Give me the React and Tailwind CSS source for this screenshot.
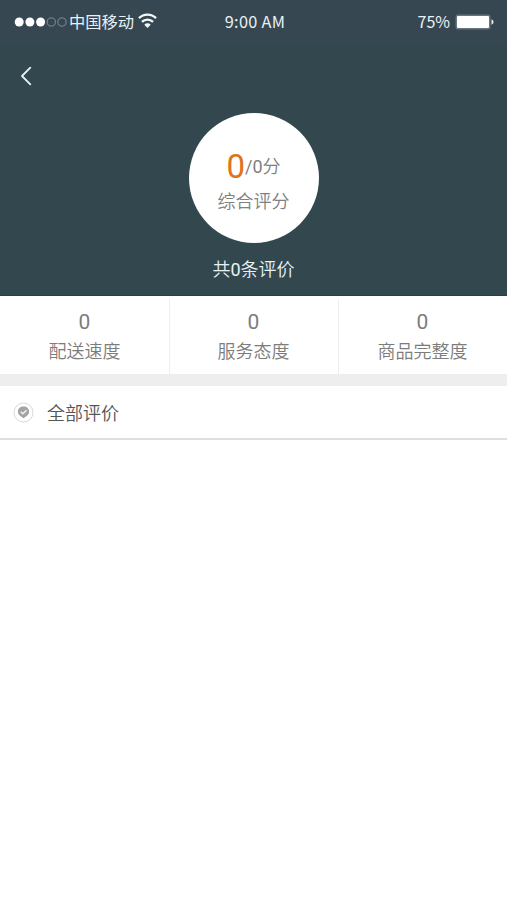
import React from "react";

const stats = [
  { label: "配送速度", value: 0 },
  { label: "服务态度", value: 0 },
  { label: "商品完整度", value: 0 },
];

const StatusBar = () => (
  <div className="grid h-11 grid-cols-3 items-center bg-[#364752] pr-[13px] pl-[14px] font-['Noto_Sans_CJK_SC',sans-serif] text-[16.3px] leading-none font-normal text-[#e8f2f5]">
    <div className="flex items-center">
      <svg width="54" height="12" viewBox="0 0 54 12" className="shrink-0">
        <circle cx="5.2" cy="6" r="4.5" fill="#fff" />
        <circle cx="15.9" cy="6" r="4.5" fill="#fff" />
        <circle cx="26.6" cy="6" r="4.5" fill="#fff" />
        <circle cx="37.3" cy="6" r="4.1" fill="none" stroke="#7f8f98" />
        <circle cx="48" cy="6" r="4.1" fill="none" stroke="#7f8f98" />
      </svg>
      <span className="mb-0.5 ml-px whitespace-nowrap">中国移动</span>
      <svg width="19" height="15" viewBox="0 0 19 15" fill="none" stroke="#f3f9fb" strokeWidth="2.4" className="mb-0.5 ml-1 shrink-0">
        <path d="M1 5.2a12 12 0 0 1 17 0" />
        <path d="M4 8.9a7.7 7.7 0 0 1 11 0" />
        <path d="M9.5 14.9l-3.200-3.200a4.500 4.500 0 0 1 6.400 0z" fill="#f3f9fb" stroke="none" />
      </svg>
    </div>
    <div className="mb-0.5 ml-0.5 text-center tracking-[0.3px] whitespace-nowrap">
      9:00 AM
    </div>
    <div className="flex items-center justify-end">
      <span className="mb-0.5 text-[16px]">75%</span>
      <svg width="39" height="16" viewBox="0 0 39 16" className="ml-[5px]">
        <rect x="0.5" y="0.5" width="35" height="15" rx="2.5" fill="#66757e" />
        <rect x="2" y="2" width="32" height="12" rx="1" fill="#fff" />
        <path d="M36.5 5.3a2.8 2.8 0 0 1 0 5.4z" fill="#e5edf0" />
      </svg>
    </div>
  </div>
);

const ScoreHeader = () => (
  <header className="h-[296px] border-b border-[#293d47] bg-[#33474f]">
    <StatusBar />
    <div className="flex h-[69px] items-start pt-[22px] pl-5">
      <svg width="13" height="20" viewBox="0 0 13 20" fill="none" stroke="#e8f2f5" strokeWidth="1.8" strokeLinecap="round" strokeLinejoin="round">
        <path d="M10.3 1.7L2 10l8.300 8.300" />
      </svg>
    </div>
    <div className="mx-auto flex size-[130px] flex-col items-center rounded-full bg-white pt-[34px] text-lg text-[#808080]">
      <div className="flex h-[41px] items-start">
        <span className="text-[33px] leading-10 font-normal text-[#df7419]">0</span>
        <span className="leading-[39px]">
          <span className="font-normal">/0</span>分
        </span>
      </div>
      <div className="leading-7">综合评分</div>
    </div>
    <div className="mt-[13px] text-center text-lg leading-7 text-[#e8f2f5]">
      共<span className="font-normal">0</span>条评价
    </div>
  </header>
);

const App = () => {
  return (
    <div className="min-h-screen bg-white font-['Roboto','Noto_Sans_CJK_SC',sans-serif] font-[350]">
      <ScoreHeader />

      <div className="grid h-[78px] grid-cols-3 pt-[3px] text-center text-[#7c7c7c]">
        {stats.map((stat) => (
          <div key={stat.label} className="border-l border-[#eeeeee] pt-[9px] pr-px first:border-transparent">
            <div className="text-[21px] leading-7 font-normal">{stat.value}</div>
            <div className="text-lg leading-[31px]">{stat.label}</div>
          </div>
        ))}
      </div>

      <div className="h-3 bg-[#eeeeee]" />

      <div className="flex h-[54px] items-center border-b-2 border-[#dfdfdf] pl-[13px]">
        <svg width="21" height="21" viewBox="0 0 21 21" fill="none">
          <circle cx="10.500" cy="10.500" r="9.500" stroke="#d9d9d9" />
          <path d="M10.500 4.600c3.400 0 5.600 2 5.600 5.200 0 2.500-1.800 4.100-5.600 6.500-3.800-2.400-5.600-4-5.600-6.500 0-3.200 2.200-5.200 5.600-5.200z" fill="#a3a3a3" />
          <path d="M7.800 9.800l2 2 3.700-3.600" stroke="#f2f2f2" strokeWidth="1.500" />
        </svg>
        <span className="mt-[3px] ml-[13px] text-lg text-[#555555]">全部评价</span>
      </div>
    </div>
  );
};

export default App;
